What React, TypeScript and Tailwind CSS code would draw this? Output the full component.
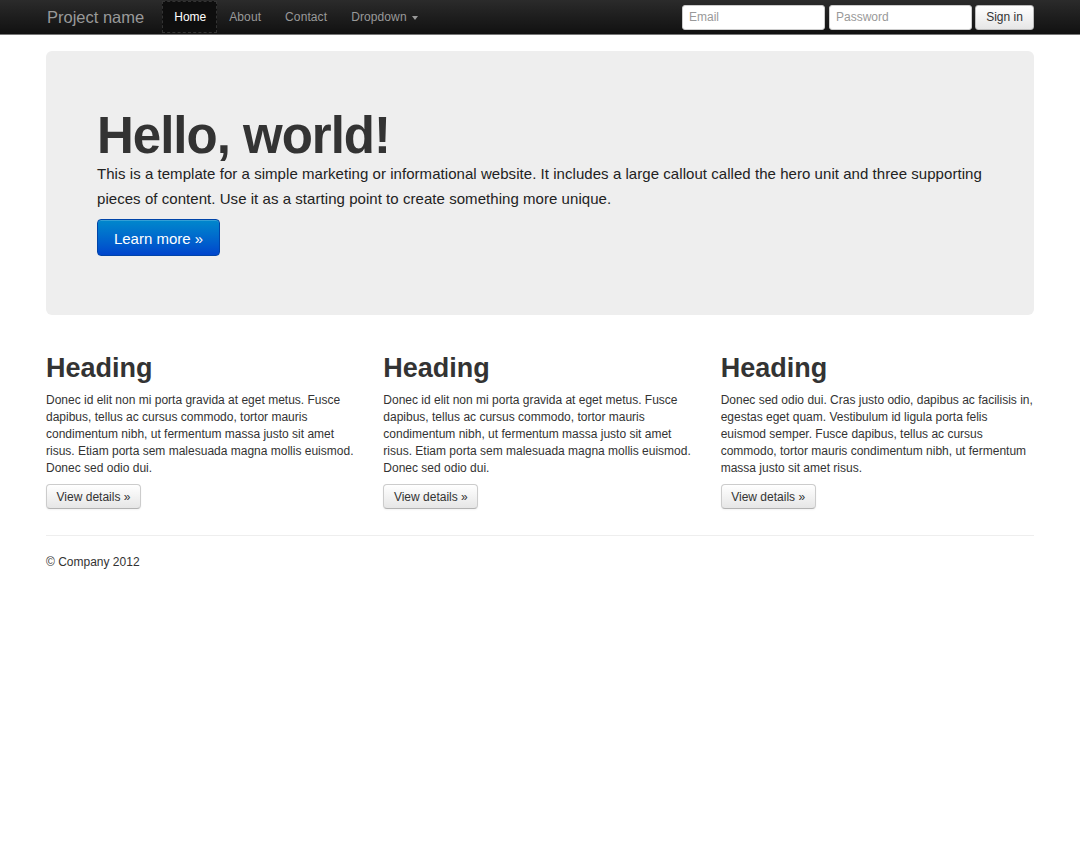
import { useState } from "react";

const NAV = ["Home", "About", "Contact"];

const COLS = [
  "Donec id elit non mi porta gravida at eget metus. Fusce dapibus, tellus ac cursus commodo, tortor mauris condimentum nibh, ut fermentum massa justo sit amet risus. Etiam porta sem malesuada magna mollis euismod. Donec sed odio dui.",
  "Donec id elit non mi porta gravida at eget metus. Fusce dapibus, tellus ac cursus commodo, tortor mauris condimentum nibh, ut fermentum massa justo sit amet risus. Etiam porta sem malesuada magna mollis euismod. Donec sed odio dui.",
  "Donec sed odio dui. Cras justo odio, dapibus ac facilisis in, egestas eget quam. Vestibulum id ligula porta felis euismod semper. Fusce dapibus, tellus ac cursus commodo, tortor mauris condimentum nibh, ut fermentum massa justo sit amet risus.",
];

function Navbar() {
  const [active, setActive] = useState("Home");
  return (
    <div className="h-[34px] bg-gradient-to-b from-[#2b2b2b] to-[#111] shadow-[0_1px_0_#777]">
      <div className="mx-[46px] flex h-full items-center">
        <a className="mr-[18px] pl-px text-[16.5px] text-[#999]">Project name</a>
        <ul className="flex h-full items-center">
          {NAV.map((n) => (
            <li key={n}>
              <button
                onClick={() => setActive(n)}
                className={
                  active === n
                    ? "flex h-[32px] items-center border border-dashed border-[#333] bg-[#0e0e0e] pl-[11px] pr-[10px] text-[12px] text-white"
                    : "flex h-[32px] items-center px-[12px] text-[12px] tracking-[0.1px] text-[#999]"
                }
              >
                {n}
              </button>
            </li>
          ))}
          <li>
            <button className="flex h-[32px] items-center gap-[5px] px-[12px] text-[12px] tracking-[0.1px] text-[#999]">
              Dropdown
              <span className="mt-px h-0 w-0 border-x-[3.5px] border-t-[4px] border-x-transparent border-t-[#999]" />
            </button>
          </li>
        </ul>
        <form className="ml-auto flex items-center gap-[4px]" onSubmit={(e) => e.preventDefault()}>
          <input
            placeholder="Email"
            className="h-[25px] w-[143px] rounded-[3px] border border-[#ccc] bg-white px-[6px] text-[12px] text-[#555] placeholder:text-[#999]"
          />
          <input
            type="password"
            placeholder="Password"
            className="h-[25px] w-[143px] rounded-[3px] border border-[#ccc] bg-white px-[6px] text-[12px] text-[#555] placeholder:text-[#999]"
          />
          <button className="-ml-px h-[25px] w-[59px] rounded-[3px] border border-[#bbb] bg-gradient-to-b from-white to-[#e6e6e6] text-[12px] text-[#333]">
            Sign in
          </button>
        </form>
      </div>
    </div>
  );
}

export default function App() {
  return (
    <div className="min-h-screen bg-white font-['Liberation_Sans',Arial,sans-serif] text-[#333]">
      <Navbar />

      <div className="mx-[46px]">
        {/* Hero */}
        <div className="mt-[17px] rounded-[6px] bg-[#eee] px-[51px] pb-[59px] pt-[59px]">
          <h1 className="text-[51px] font-bold leading-none tracking-[-1px] text-[#333]">Hello, world!</h1>
          <p className="text-[15px] leading-[25px] tracking-[0.05px] text-[#222]">
            This is a template for a simple marketing or informational website. It includes a large callout called
            the hero unit and three supporting pieces of content. Use it as a starting point to create something more
            unique.
          </p>
          <button className="mt-[8px] h-[37px] w-[123px] rounded-[4px] border border-[#0044a8] bg-gradient-to-b from-[#0088cc] to-[#0044cc] pt-[3px] text-[15px] text-white shadow-[inset_0_1px_0_rgba(255,255,255,0.2)]">
            Learn more »
          </button>
        </div>

        {/* Columns */}
        <div className="mt-[35px] grid grid-cols-3 gap-x-[24px]">
          {COLS.map((t, i) => (
            <div key={i}>
              <h2 className="text-[27px] font-bold leading-[36px] text-[#333]">Heading</h2>
              <p className="mt-[6px] text-[12px] leading-[17px] text-[#333]">{t}</p>
              <button className="mt-[7px] h-[25px] w-[95px] rounded-[4px] border border-[#ccc] border-b-[#b3b3b3] bg-gradient-to-b from-white to-[#e6e6e6] text-[12px] text-[#333] shadow-[0_1px_2px_rgba(0,0,0,0.05)]">
                View details »
              </button>
            </div>
          ))}
        </div>

        <hr className="mt-[26px] border-t border-[#eee]" />
        <footer className="pt-[18px] text-[12px] leading-[17px]">© Company 2012</footer>
      </div>
    </div>
  );
}
